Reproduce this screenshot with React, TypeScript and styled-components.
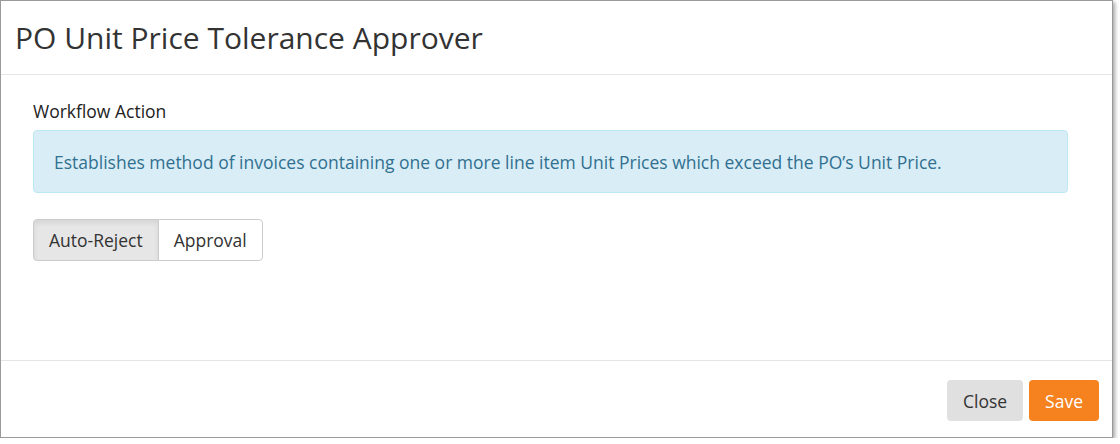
import React, { useState } from "react";
import styled, { createGlobalStyle } from "styled-components";

const GlobalStyle = createGlobalStyle`
  html, body {
    margin: 0;
    padding: 0;
    background: #ffffff;
    font-family: "Open Sans", "Noto Sans", sans-serif;
  }
`;

const Modal = styled.div`
  width: 1113px;
  box-sizing: border-box;
  border: 1px solid #9a9a9a;
  background: #ffffff;
  box-shadow: 2px 2px 4px rgba(0, 0, 0, 0.35);
`;

const Header = styled.div`
  height: 73px;
  display: flex;
  align-items: center;
  padding: 0 14px;
  border-bottom: 1px solid #e5e5e5;
`;

const Title = styled.h4`
  margin: 0;
  font-size: 30px;
  font-weight: 400;
  color: #333333;
`;

const Body = styled.div`
  height: 285px;
  box-sizing: border-box;
  padding: 25px 44px 0 32px;
`;

const Label = styled.div`
  font-size: 17.5px;
  line-height: 22px;
  color: #222222;
  margin-bottom: 8px;
`;

const Alert = styled.div`
  height: 63px;
  box-sizing: border-box;
  display: flex;
  align-items: center;
  padding: 0 20px;
  background: #d9edf7;
  border: 1px solid #bce8f1;
  border-radius: 4px;
  color: #31708f;
  font-size: 17.5px;
`;

const ToggleGroup = styled.div`
  display: inline-flex;
  margin-top: 26px;
`;

const Toggle = styled.button<{ $active: boolean; $first: boolean }>`
  height: 42px;
  padding: 0 15px;
  font-family: inherit;
  font-size: 17.5px;
  color: #333333;
  border: 1px solid #cccccc;
  background: ${(p) => (p.$active ? "#e6e6e6" : "#ffffff")};
  box-shadow: ${(p) => (p.$active ? "inset 0 3px 5px rgba(0,0,0,0.08)" : "none")};
  border-radius: ${(p) => (p.$first ? "4px 0 0 4px" : "0 4px 4px 0")};
  margin-left: ${(p) => (p.$first ? "0" : "-1px")};
  cursor: pointer;
`;

const Footer = styled.div`
  display: flex;
  justify-content: flex-end;
  gap: 6px;
  padding: 19px 13px 16px;
  border-top: 1px solid #e5e5e5;
`;

const FooterButton = styled.button<{ $primary?: boolean }>`
  height: 41px;
  padding: 0 16px;
  font-family: inherit;
  font-size: 17.5px;
  border: none;
  border-radius: 4px;
  background: ${(p) => (p.$primary ? "#f5821f" : "#e0e0e0")};
  color: ${(p) => (p.$primary ? "#ffffff" : "#333333")};
  cursor: pointer;
`;

export default function App() {
  const [mode, setMode] = useState("Auto-Reject");
  const options = ["Auto-Reject", "Approval"];

  return (
    <>
      <GlobalStyle />
      <Modal>
        <Header>
          <Title>PO Unit Price Tolerance Approver</Title>
        </Header>
        <Body>
          <Label>Workflow Action</Label>
          <Alert>
            Establishes method of invoices containing one or more line item Unit Prices which exceed the PO’s Unit Price.
          </Alert>
          <ToggleGroup>
            {options.map((o, i) => (
              <Toggle key={o} $active={mode === o} $first={i === 0} onClick={() => setMode(o)}>
                {o}
              </Toggle>
            ))}
          </ToggleGroup>
        </Body>
        <Footer>
          <FooterButton>Close</FooterButton>
          <FooterButton $primary>Save</FooterButton>
        </Footer>
      </Modal>
    </>
  );
}
